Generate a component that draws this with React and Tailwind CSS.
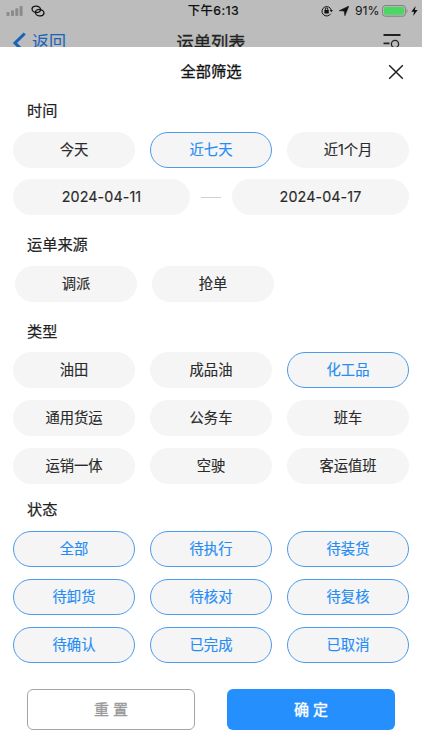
import React, { useState } from 'react';

const types = ['油田', '成品油', '化工品', '通用货运', '公务车', '班车', '运销一体', '空驶', '客运值班'];
const statuses = ['全部', '待执行', '待装货', '待卸货', '待核对', '待复核', '待确认', '已完成', '已取消'];

const StatusBar = () => (
  <div className="h-[22px] flex items-center justify-between pl-[6px] pr-[4px] text-[#111] relative">
    <div className="flex items-center">
      <svg className="w-[18px] h-[12px]" viewBox="0 0 18 12" fill="#8b8b8b">
        <rect x="0.5" y="7" width="3" height="4" rx="0.8" />
        <rect x="5" y="5.2" width="3" height="5.8" rx="0.8" />
        <rect x="9.3" y="3.2" width="3" height="7.8" rx="0.8" />
        <rect x="13.6" y="1" width="3" height="10" rx="0.8" />
      </svg>
      <svg className="w-[14px] h-[12px] ml-[7px]" viewBox="0 0 14 12" fill="none" stroke="currentColor" strokeWidth="1.3" strokeLinecap="round">
        <ellipse cx="5.3" cy="4.3" rx="4.3" ry="3.2" transform="rotate(8 5.3 4.3)" />
        <ellipse cx="8.7" cy="7.7" rx="4.3" ry="3.2" transform="rotate(8 8.7 7.7)" />
      </svg>
    </div>
    <div className="absolute inset-x-0 text-center pl-[5px] text-[12.300px] leading-[22px] font-medium tracking-[0.4px] [-webkit-text-stroke:0.1px]">下午6:13</div>
    <div className="flex items-center">
      <svg className="w-[12px] h-[12px]" viewBox="0 0 12 12" fill="none" stroke="currentColor" strokeWidth="1">
        <path d="M9.700 8.800A4.700 4.700 0 1 1 10.300 5.200" />
        <path d="M8.700 5H11.900L10.300 7.300Z" fill="currentColor" stroke="none" />
        <rect x="3.400" y="5.100" width="4.400" height="3.300" rx="0.4" fill="currentColor" stroke="none" />
        <path d="M4.400 5.400V4.100A1.200 1.200 0 0 1 6.800 4.100V5.400" strokeWidth="1" />
      </svg>
      <svg className="w-[10px] h-[10px] ml-[6px]" viewBox="0 0 10 10" fill="currentColor">
        <path d="M9.900 0.100L5.900 9.800L5.100 5.100L0.100 4.700Z" stroke="currentColor" strokeWidth="0.5" />
      </svg>
      <span className="ml-[6px] w-[24px] text-[12.200px] leading-[22px] whitespace-nowrap">91%</span>
      <svg className="w-[27px] h-[12px] ml-[3px]" viewBox="0 0 27 12">
        <rect x="0.600" y="0.600" width="22.800" height="10.600" rx="2.600" fill="none" stroke="#7d7d7d" strokeWidth="1" />
        <rect x="2" y="2" width="20" height="7.800" rx="1.400" fill="#4bd763" />
        <path d="M24.600 4V8C25.800 7.600 25.800 4.400 24.600 4Z" fill="#7d7d7d" />
      </svg>
      <svg className="w-[7px] h-[10px] ml-[2px]" viewBox="0 0 7 10" fill="currentColor">
        <path d="M4.600 0L0.300 5.700H3L2.100 10L6.700 4.100H3.900Z" />
      </svg>
    </div>
  </div>
);

const NavBar = () => (
  <div className="h-[25px] overflow-hidden flex items-start justify-between pl-[12px] pr-[21px] relative">
    <div className="flex items-start text-[#1763b8]">
      <svg className="w-[14px] h-[22px] mt-[10px]" viewBox="0 0 14 22" fill="none" stroke="currentColor" strokeWidth="3">
        <path d="M12.700 1.500L3 11L12.700 20.500" />
      </svg>
      <span className="ml-[6px] text-[17px] leading-[41px]">返回</span>
    </div>
    <div className="absolute inset-x-0 text-center text-[17.300px] leading-[41px] text-[#222] [-webkit-text-stroke:0.3px]">运单列表</div>
    <svg className="w-[18px] h-[18px] mt-[12px]" viewBox="0 0 18 18" fill="none" stroke="#222" strokeWidth="1.800">
      <path d="M0.500 1H17.500M0.500 9.300H6.500M0.500 16.500H8" />
      <circle cx="12" cy="10" r="3.600" strokeWidth="1.300" />
    </svg>
  </div>
);

const Heading = ({ children }) => (
  <h3 className="h-[22px] pl-[14px] text-[15.200px] leading-[22px] text-[#222] [-webkit-text-stroke:0.2px]">{children}</h3>
);

const Pill = ({ active, onClick, children }) => (
  <button
    onClick={onClick}
    className={`h-[36px] w-full rounded-full border text-[14.300px] leading-none flex items-center justify-center bg-[#f5f5f5] pt-px [-webkit-text-stroke:0.15px] ${active ? 'border-[#4a9bea] text-[#258cf4]' : 'border-[#f5f5f5] text-[#2a2a2a]'}`}
  >
    {children}
  </button>
);

const App = () => {
  const [range, setRange] = useState('近七天');
  const [source, setSource] = useState(null);
  const [type, setType] = useState('化工品');
  const [selected, setSelected] = useState(statuses);

  const toggleStatus = (s) => {
    setSelected(prev => prev.includes(s) ? prev.filter(x => x !== s) : [...prev, s]);
  };

  const reset = () => {
    setRange(null);
    setSource(null);
    setType(null);
    setSelected([]);
  };

  return (
    <div className="w-full h-screen overflow-hidden flex flex-col bg-[#bcbcbc] font-[Inter,'Noto_Sans_CJK_SC',sans-serif]">
      <StatusBar />
      <NavBar />

      <div className="flex-1 bg-white px-[13px]">
        <div className="h-[50px] relative flex items-center justify-center">
          <h2 className="text-[15.300px] leading-[22px] text-[#111] [-webkit-text-stroke:0.3px]">全部筛选</h2>
          <button className="absolute right-[5px] top-[17px]">
            <svg className="w-[16px] h-[16px]" viewBox="0 0 16 16" fill="none" stroke="#222" strokeWidth="1.500">
              <path d="M1.200 1.200L14.800 14.800M14.800 1.200L1.200 14.800" />
            </svg>
          </button>
        </div>

        <div className="pt-[3px]">
          <Heading>时间</Heading>
          <div className="grid grid-cols-3 gap-x-[15px] mt-[10px]">
            {['今天', '近七天', '近1个月'].map(r => (
              <Pill key={r} active={range === r} onClick={() => setRange(r)}>{r}</Pill>
            ))}
          </div>
          <div className="flex items-center mt-[11px]">
            <div className="w-[177px] tracking-[0.1px]"><Pill>2024-04-11</Pill></div>
            <div className="flex-1 px-[11px]"><div className="h-px bg-[#d0d0d0]" /></div>
            <div className="w-[177px] tracking-[0.1px]"><Pill>2024-04-17</Pill></div>
          </div>
        </div>

        <div className="mt-[19px]">
          <Heading>运单来源</Heading>
          <div className="grid grid-cols-3 gap-x-[15px] mt-[10px] ml-[2px] -mr-[2px]">
            {['调派', '抢单'].map(s => (
              <Pill key={s} active={source === s} onClick={() => setSource(s)}>{s}</Pill>
            ))}
          </div>
        </div>

        <div className="mt-[19px]">
          <Heading>类型</Heading>
          <div className="grid grid-cols-3 gap-x-[15px] gap-y-[12px] mt-[9px]">
            {types.map(t => (
              <Pill key={t} active={type === t} onClick={() => setType(t)}>{t}</Pill>
            ))}
          </div>
        </div>

        <div className="mt-[15px]">
          <Heading>状态</Heading>
          <div className="grid grid-cols-3 gap-x-[15px] gap-y-[12px] mt-[10px]">
            {statuses.map(s => (
              <Pill key={s} active={selected.includes(s)} onClick={() => toggleStatus(s)}>{s}</Pill>
            ))}
          </div>
        </div>

        <div className="flex gap-[32px] mt-[26px] px-[14px]">
          <button onClick={reset} className="w-[168px] h-[41px] rounded-[6px] border border-[#a5a5a5] pt-px text-[15px] text-[#999] [-webkit-text-stroke:0.3px]">重 置</button>
          <button className="w-[168px] h-[41px] rounded-[6px] bg-[#258ffd] pt-px text-[15px] text-white [-webkit-text-stroke:0.4px]">确 定</button>
        </div>
      </div>
    </div>
  );
};

export default App;
